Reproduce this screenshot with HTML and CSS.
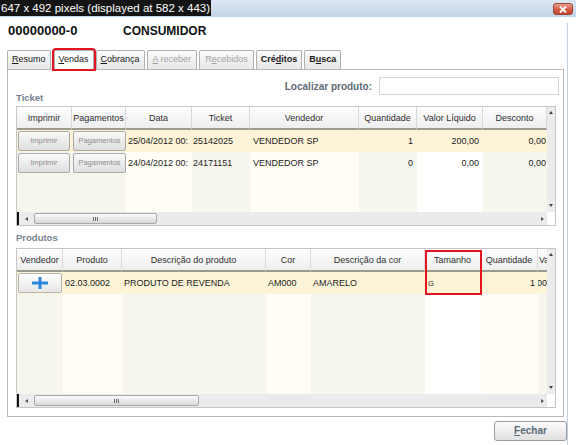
FILE: index.html
```html
<!DOCTYPE html>
<html>
<head>
<meta charset="utf-8">
<link rel="stylesheet" href="styles.css">
</head>
<body>
<div class="titlebar">
  <span class="dimlabel">647 x 492 pixels (displayed at 582 x 443)</span>
  <span class="close"><svg width="10" height="7" viewBox="0 0 10 7"><path d="M2 0.5 L8 6.5 M8 0.5 L2 6.5" stroke="#fff" stroke-width="1.8"/></svg></span>
</div>
<div class="client">
  <div class="head"><span class="code">00000000-0</span><span class="name">CONSUMIDOR</span></div>
  <div class="tabs">
    <div class="tab"><u>R</u>esumo</div>
    <div class="tab active"><u>V</u>endas</div>
    <div class="tab"><u>C</u>obrança</div>
    <div class="tab off"><u>A</u> receber</div>
    <div class="tab off">R<u>e</u>cebidos</div>
    <div class="tab strong">Cré<u>d</u>itos</div>
    <div class="tab strong">B<u>u</u>sca</div>
  </div>
  <div class="panel">
    <div class="search"><span class="slabel">Localizar produto:</span><div class="input"></div></div>
    <div class="section">Ticket</div>
    <div class="grid g1">
      <div class="gmain">
        <table class="t">
          <colgroup>
            <col class="gray w55"><col class="gray w54"><col class="cream w66"><col class="gray w58"><col class="cream w109"><col class="gray w58"><col class="white w66"><col class="gray w64">
          </colgroup>
          <thead>
            <tr><th>Imprimir</th><th>Pagamentos</th><th>Data</th><th>Ticket</th><th>Vendedor</th><th>Quantidade</th><th>Valor Líquido</th><th>Desconto</th></tr>
          </thead>
          <tbody>
            <tr class="sel">
              <td><div class="cbtn w52">Imprimir</div></td>
              <td><div class="cbtn w53">Pagamentos</div></td>
              <td class="l">25/04/2012 00:</td>
              <td class="l t1">25142025</td>
              <td class="l v">VENDEDOR SP</td>
              <td class="r">1</td>
              <td class="r">200,00</td>
              <td class="r e">0,00</td>
            </tr>
            <tr>
              <td><div class="cbtn w52">Imprimir</div></td>
              <td><div class="cbtn w53">Pagamentos</div></td>
              <td class="l">24/04/2012 00:</td>
              <td class="l t1">24171151</td>
              <td class="l v">VENDEDOR SP</td>
              <td class="r">0</td>
              <td class="r">0,00</td>
              <td class="r e">0,00</td>
            </tr>
            <tr class="fill f1"><td></td><td></td><td></td><td></td><td></td><td></td><td></td><td></td></tr>
          </tbody>
        </table>
        <div class="vs"><i class="up"></i><i class="down"></i></div>
      </div>
      <div class="hs">
        <div class="track"><i class="mark"></i><i class="al"></i><div class="thumb th1"><i class="grip"></i><i class="grip"></i><i class="grip"></i></div><span class="sp"></span><i class="ar"></i></div>
        <div class="corner"></div>
      </div>
    </div>
    <div class="section s2">Produtos</div>
    <div class="grid g2">
      <div class="gmain">
        <table class="t">
          <colgroup>
            <col class="gray w46"><col class="cream w59"><col class="gray w144"><col class="cream w45"><col class="gray w114"><col class="white w56"><col class="cream w57"><col class="gray w9">
          </colgroup>
          <thead>
            <tr><th>Vendedor</th><th>Produto</th><th>Descrição do produto</th><th>Cor</th><th>Descrição da cor</th><th>Tamanho</th><th>Quantidade</th><th class="cut">Va</th></tr>
          </thead>
          <tbody>
            <tr class="sel">
              <td><div class="pbtn"><svg width="16" height="12" viewBox="0 0 16 12"><rect x="0" y="4.5" width="16" height="3" fill="#2a86d9"/><rect x="6.5" y="0" width="3" height="12" fill="#2a86d9"/></svg></div></td>
              <td class="l">02.03.0002</td>
              <td class="l">PRODUTO DE REVENDA</td>
              <td class="l">AM000</td>
              <td class="l">AMARELO</td>
              <td class="l sm">G</td>
              <td class="r q">1</td>
              <td class="clip"><div class="endtxt">00</div></td>
            </tr>
            <tr class="fill f2"><td></td><td></td><td></td><td></td><td></td><td></td><td></td><td></td></tr>
          </tbody>
        </table>
        <div class="vs"><i class="up"></i><i class="down"></i></div>
      </div>
      <div class="hs">
        <div class="track"><i class="mark"></i><i class="al"></i><div class="thumb th2"><i class="grip"></i><i class="grip"></i><i class="grip"></i></div><span class="sp"></span><i class="ar"></i></div>
        <div class="corner"></div>
      </div>
      <div class="redbox"></div>
    </div>
  </div>
  <div class="footer"><div class="btn"><u>F</u>echar</div></div>
</div>
</body>
</html>
```
FILE: styles.css
```css
* { box-sizing: border-box; }
body {
  margin: 0;
  width: 576px;
  height: 445px;
  overflow: hidden;
  background: #fff;
  font-family: "Liberation Sans", Arial, sans-serif;
  font-size: 9px;
  color: #1e1e1e;
}
.titlebar {
  height: 17px;
  background: linear-gradient(#dce7f3, #c2d3e8);
  display: flex;
  justify-content: space-between;
  align-items: flex-start;
}
.dimlabel {
  background: #141414;
  color: #fff;
  font-family: "Liberation Sans Narrow", "Liberation Sans", sans-serif;
  font-size: 11.5px;
  height: 16px;
  line-height: 16px;
  padding: 0 1px;
  white-space: nowrap;
}
.close {
  margin: 3px 3px 0 0;
  width: 20px;
  height: 12px;
  border: 1px solid #9b4434;
  border-radius: 3px;
  background: linear-gradient(#eba08d, #d46049 50%, #c0462e);
  display: flex;
  align-items: center;
  justify-content: center;
}
.client {
  width: 568px;
  height: 428px;
  padding-left: 7px;
  border-right: 1px solid #c3d0de;
}
.head {
  margin-top: 6px;
  height: 16px;
  line-height: 16px;
  padding-left: 1px;
  font-weight: bold;
  font-size: 12px;
  color: #111;
  display: flex;
}
.code { width: 115px; font-size: 13px; }
.tabs {
  margin-top: 11px;
  height: 19px;
  display: flex;
  align-items: flex-end;
  gap: 2px;
}
.tab {
  height: 19px;
  line-height: 17px;
  padding: 0 4px;
  border: 1px solid #b0b0b0;
  border-bottom: none;
  border-radius: 2px 2px 0 0;
  background: linear-gradient(#fbfbfb, #e7e7e7);
  color: #1a1a1a;
  white-space: nowrap;
}
.tab u { text-decoration: underline; }
.tab.active {
  height: 19px;
  margin-left: 1px;
  background: #fff;
  position: relative;
  z-index: 1;
  outline: 2px solid #e2141f;
  outline-offset: 0px;
}
.tab.off { color: #a2a2a2; padding: 0 5px; }
.tab.strong { font-weight: bold; padding: 0 4px; }
.panel {
  width: 557px;
  height: 348px;
  border: 1px solid #b8b8b8;
  background: #fff;
  padding: 7px 4px 0 8px;
}
.search {
  height: 18px;
  display: flex;
  justify-content: flex-end;
  align-items: center;
  gap: 7px;
}
.slabel { font-weight: bold; font-size: 10px; color: #5e6a76; }
.input {
  width: 180px;
  height: 18px;
  border: 1px solid #cfd5dc;
  background: #fff;
}
.section {
  margin-top: -3px;
  height: 12px;
  line-height: 12px;
  font-weight: bold;
  font-size: 9.5px;
  color: #74828f;
}
.section.s2 { margin-top: 6px; }
.grid {
  position: relative;
  width: 540px;
  border: 1px solid #c6c6c6;
  background: #fff;
}
.g1 { margin-top: 2px; height: 120px; }
.g2 { margin-top: 4px; height: 160px; }
.gmain { display: flex; }
.g1 .gmain { height: 105px; }
.g2 .gmain { height: 145px; }
.t {
  width: 530px;
  table-layout: fixed;
  border-collapse: separate;
  border-spacing: 0;
  align-self: flex-start;
}
.gray { background: #f6f6ef; }
.cream { background: #fffdf5; }
.white { background: #fffffe; }
.w9 { width: 9px; } .w45 { width: 45px; } .w46 { width: 46px; } .w54 { width: 54px; }
.w55 { width: 55px; } .w56 { width: 56px; } .w57 { width: 57px; } .w58 { width: 58px; }
.w59 { width: 59px; } .w64 { width: 64px; } .w66 { width: 66px; } .w109 { width: 109px; }
.w114 { width: 114px; } .w144 { width: 144px; }
th {
  height: 23px;
  padding: 0;
  font-weight: normal;
  color: #2e2e2e;
  background: linear-gradient(#fefefe, #eeeeee);
  border-right: 1px solid #d9d9d9;
  border-bottom: 2px solid #9c998f;
  white-space: nowrap;
  overflow: hidden;
  text-align: center;
}
th.cut { text-align: left; padding-left: 1px; border-right: none; }
td {
  height: 22px;
  padding: 0;
  white-space: nowrap;
  overflow: hidden;
  vertical-align: middle;
  color: #1c1c1c;
}
td.l { padding-left: 2px; text-overflow: clip; }
td.t1 { padding-left: 1px; }
td.v { padding-left: 3px; }
td.r { text-align: right; padding-right: 4px; }
td.q { padding-right: 3px; }
td.e { padding-right: 1px; }
td.sm { font-size: 7.5px; padding-left: 3px; }
tr.sel { background: #fdf4d8; }
tr.f1 td { height: 38px; }
tr.f2 td { height: 100px; }
.cbtn {
  margin-left: 1px;
  height: 20px;
  line-height: 18px;
  border: 1px solid #a9a9a9;
  border-radius: 2px;
  background: linear-gradient(#f9f9f9, #dedede);
  color: #8c8c8c;
  font-size: 7.5px;
  text-align: center;
  overflow: hidden;
  white-space: nowrap;
}
.w52 { width: 52px; }
.w53 { width: 53px; }
.pbtn {
  margin-left: 1px;
  width: 44px;
  height: 20px;
  border: 1px solid #b4b4b4;
  border-radius: 2px;
  background: linear-gradient(#ffffff, #e6e6e6);
  display: flex;
  align-items: center;
  justify-content: center;
}
td.clip { overflow: hidden; }
.endtxt { display: flex; justify-content: flex-end; overflow: hidden; width: 9px; }
.vs {
  width: 8px;
  background: #ececec;
  display: flex;
  flex-direction: column;
  justify-content: space-between;
  align-items: center;
  padding: 4px 0 5px;
}
.vs .up {
  border-style: solid;
  border-width: 0 2.5px 3px 2.5px;
  border-color: transparent transparent #444 transparent;
}
.vs .down {
  border-style: solid;
  border-width: 3px 2.5px 0 2.5px;
  border-color: #444 transparent transparent transparent;
}
.hs { display: flex; height: 13px; }
.track {
  width: 530px;
  height: 13px;
  background: #ebebeb;
  display: flex;
  align-items: center;
}
.mark { width: 2px; height: 13px; background: #111; }
.al {
  margin-left: 6px;
  border-style: solid;
  border-width: 2.5px 3px 2.5px 0;
  border-color: transparent #555 transparent transparent;
}
.ar {
  margin-right: 3px;
  border-style: solid;
  border-width: 2.5px 0 2.5px 3px;
  border-color: transparent transparent transparent #555;
}
.thumb {
  margin-left: 6px;
  height: 11px;
  border: 1px solid #a8a8a8;
  border-radius: 2px;
  background: linear-gradient(#fbfbfb, #d8d8d8);
  display: flex;
  justify-content: center;
  align-items: center;
  gap: 1px;
}
.th1 { width: 123px; }
.th2 { width: 165px; }
.grip { width: 1px; height: 4px; background: #6a6a6a; }
.sp { flex: 1; }
.corner { width: 8px; background: #fff; }
.redbox {
  position: absolute;
  left: 408px;
  top: 1px;
  width: 57px;
  height: 45px;
  border: 2px solid #e2141f;
}
.footer {
  display: flex;
  justify-content: flex-end;
  margin-top: 4px;
}
.btn {
  width: 73px;
  height: 20px;
  line-height: 18px;
  border: 1px solid #9c9c9c;
  border-radius: 3px;
  background: linear-gradient(#fbfbfb, #e0e0e0);
  color: #5b6a79;
  font-weight: bold;
  font-size: 10px;
  text-align: center;
}
```
